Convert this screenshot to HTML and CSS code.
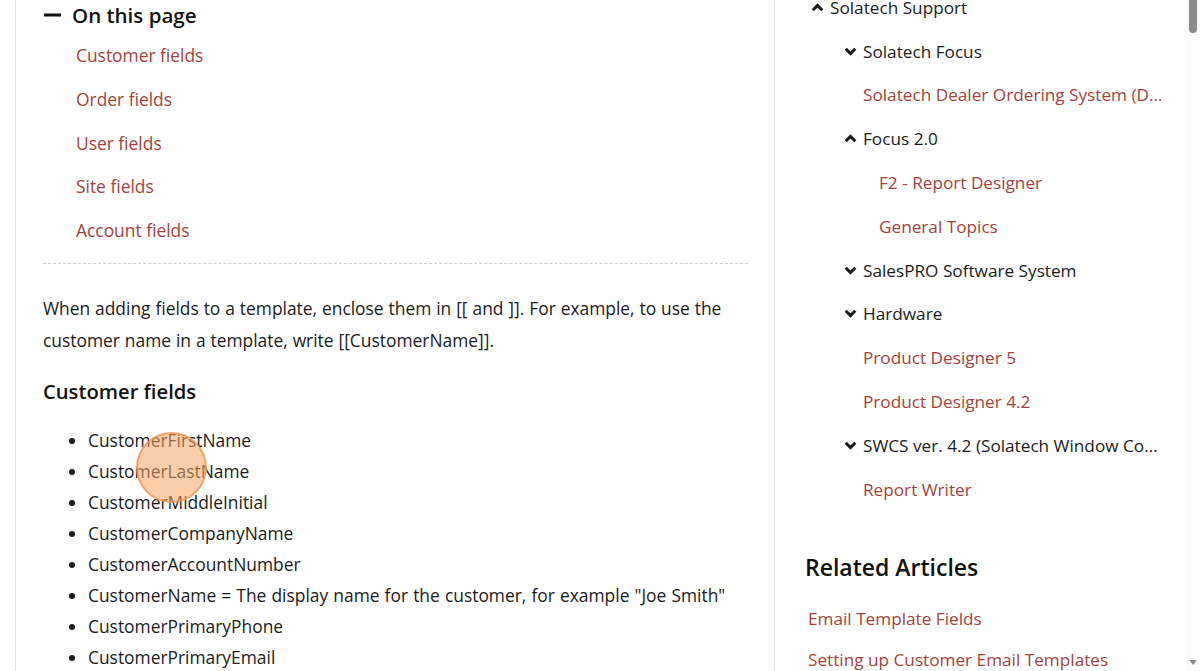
FILE: index.html
```html
<!DOCTYPE html>
<html lang="en">
<head>
<meta charset="utf-8">
<title>Email Template Fields</title>
<link rel="stylesheet" href="styles.css">
</head>
<body>
<div class="page">
  <main class="main">
    <section class="toc">
      <div class="toc-head">
        <svg class="minus" width="18" height="4" viewBox="0 0 18 4"><rect x="0" y="0.5" width="17" height="3" fill="#111"/></svg>
        <span>On this page</span>
      </div>
      <ul class="toc-links">
        <li><a href="#">Customer fields</a></li>
        <li><a href="#">Order fields</a></li>
        <li><a href="#">User fields</a></li>
        <li><a href="#">Site fields</a></li>
        <li><a href="#">Account fields</a></li>
      </ul>
    </section>
    <p class="intro">When adding fields to a template, enclose them in [[ and ]]. For example, to use the customer name in a template, write [[CustomerName]].</p>
    <h3 class="section-title">Customer fields</h3>
    <ul class="fields">
      <li>CustomerFirstName</li>
      <li>CustomerLastName</li>
      <li>CustomerMiddleInitial</li>
      <li>CustomerCompanyName</li>
      <li>CustomerAccountNumber</li>
      <li>CustomerName = The display name for the customer, for example "Joe Smith"</li>
      <li>CustomerPrimaryPhone</li>
      <li>CustomerPrimaryEmail</li>
    </ul>
    <div class="click-marker"></div>
  </main>
  <aside class="side">
    <ul class="tree">
      <li class="node l1"><svg class="chev" viewBox="0 0 13 9"><polyline points="1.7,7.3 6.5,2.4 11.3,7.3"/></svg><span>Solatech Support</span></li>
      <li class="node l2"><svg class="chev" viewBox="0 0 13 9"><polyline points="1.7,1.7 6.5,6.6 11.3,1.7"/></svg><span>Solatech Focus</span></li>
      <li class="leaf l2"><a href="#">Solatech Dealer Ordering System (DOS) Solatech Dealer Ordering System</a></li>
      <li class="node l2"><svg class="chev" viewBox="0 0 13 9"><polyline points="1.7,7.3 6.5,2.4 11.3,7.3"/></svg><span>Focus 2.0</span></li>
      <li class="leaf l3"><a href="#">F2 - Report Designer</a></li>
      <li class="leaf l3"><a href="#">General Topics</a></li>
      <li class="node l2"><svg class="chev" viewBox="0 0 13 9"><polyline points="1.7,1.7 6.5,6.6 11.3,1.7"/></svg><span>SalesPRO Software System</span></li>
      <li class="node l2"><svg class="chev" viewBox="0 0 13 9"><polyline points="1.7,1.7 6.5,6.6 11.3,1.7"/></svg><span>Hardware</span></li>
      <li class="leaf l2"><a href="#">Product Designer 5</a></li>
      <li class="leaf l2"><a href="#">Product Designer 4.2</a></li>
      <li class="node l2"><svg class="chev" viewBox="0 0 13 9"><polyline points="1.7,1.7 6.5,6.6 11.3,1.7"/></svg><span>SWCS ver. 4.2 (Solatech Window Configuration System)</span></li>
      <li class="leaf l2"><a href="#">Report Writer</a></li>
    </ul>
    <h2 class="related-title">Related Articles</h2>
    <ul class="related">
      <li><a href="#">Email Template Fields</a></li>
      <li><a href="#">Setting up Customer Email Templates</a></li>
    </ul>
  </aside>
  <div class="scrollbar">
    <div class="thumb"></div>
    <div class="arrow-down"></div>
  </div>
</div>
</body>
</html>
```
FILE: styles.css
```css
* { box-sizing: border-box; }
html, body {
  margin: 0;
  padding: 0;
  height: 671px;
  overflow: hidden;
  background: #fff;
}
body {
  font-family: "Open Sans", "Noto Sans", sans-serif;
  font-size: 17.2px;
  color: #1b1b1b;
}
a { color: #a3433b; text-decoration: none; }
ul { list-style: none; margin: 0; padding: 0; }

.page {
  display: flex;
  height: 671px;
}

.main {
  position: relative;
  width: 760px;
  margin-left: 15px;
  border-left: 1px solid #e3e3e3;
  border-right: 1px solid #e3e3e3;
  padding: 0 26px 0 27px;
  flex: none;
  font-size: 17.4px;
}

.toc {
  border-bottom: 1px dashed #cfcfcf;
  margin-top: -6px;
  padding-bottom: 10px;
}
.toc-head {
  display: flex;
  align-items: center;
  height: 42px;
  font-size: 20.5px;
  font-weight: 600;
  color: #111;
}
.minus { margin: 0 10px 0 1px; }
.toc-links { padding-left: 33px; margin-top: -2px; }
.toc-links li {
  height: 43.8px;
  line-height: 43.8px;
}

.intro {
  margin: 28px 0 0;
  line-height: 32px;
  word-spacing: 0.4px;
}
.section-title {
  margin: 19px 0 0;
  font-size: 20.2px;
  font-weight: 600;
  color: #111;
  line-height: 32px;
}
.fields {
  margin-top: 18px;
  padding-left: 45px;
  list-style: disc;
}
.fields li {
  line-height: 31px;
  word-spacing: 0.6px;
}

.click-marker {
  position: absolute;
  left: 120px;
  top: 432px;
  width: 71px;
  height: 71px;
  border-radius: 50%;
  background: rgba(245, 165, 100, 0.55);
  border: 2px solid rgba(238, 150, 80, 0.75);
}

.side {
  flex: 1;
  min-width: 0;
  padding: 0 20px 0 30px;
}
.tree { margin-top: -14.5px; }
.tree li {
  display: flex;
  align-items: center;
  height: 43.8px;
  white-space: nowrap;
  overflow: hidden;
}
.tree li span, .tree li a {
  overflow: hidden;
  text-overflow: ellipsis;
  white-space: nowrap;
  min-width: 0;
}
.chev {
  width: 13px;
  height: 9px;
  flex: none;
  margin-right: 6px;
  fill: none;
  stroke: #1a1a1a;
  stroke-width: 3;
}
.node.l1 { padding-left: 6px; }
.node.l2 { padding-left: 39px; }
.leaf.l2 { padding-left: 58px; }
.leaf.l3 { padding-left: 74px; }

.related-title {
  margin: 39.5px 0 0;
  font-size: 23px;
  font-weight: 600;
  color: #111;
  line-height: 32px;
}
.related { margin-top: 24px; padding-left: 3px; }
.related li { height: 41px; line-height: 0; }
.related li a { line-height: 24px; display: inline-block; }

.scrollbar {
  position: relative;
  width: 14px;
  flex: none;
  background: #fcfcfc;
}
.thumb {
  position: absolute;
  left: 3px;
  top: -6px;
  width: 8px;
  height: 39px;
  border-radius: 4px;
  background: #8c8c8c;
}
.arrow-down {
  position: absolute;
  left: 3px;
  bottom: 6px;
  width: 0;
  height: 0;
  border-left: 4px solid transparent;
  border-right: 4px solid transparent;
  border-top: 5px solid #8c8c8c;
}
```
